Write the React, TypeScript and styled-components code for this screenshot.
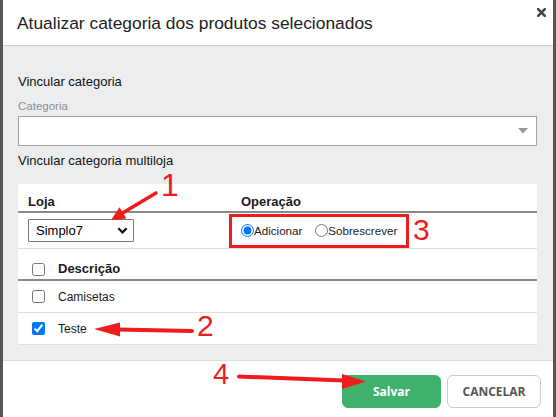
import React from 'react';
import styled, { createGlobalStyle } from 'styled-components';

const GlobalStyle = createGlobalStyle`
  html, body { margin: 0; padding: 0; background: #565656; }
  body { font-family: "Liberation Sans", Arial, sans-serif; }
  * { box-sizing: border-box; }
`;

const Screen = styled.div`
  position: relative;
  width: 556px;
  height: 417px;
  overflow: hidden;
  padding: 0 3px;
  background: #565656;
`;

const Modal = styled.div`
  height: 100%;
  background: #fff;
  display: flex;
  flex-direction: column;
`;

const Header = styled.header`
  display: flex;
  justify-content: space-between;
  align-items: flex-start;
  height: 46px;
  padding: 13px 7px 0 14px;
  border-bottom: 1px solid #cfcfcf;
`;

const Title = styled.h1`
  margin: 0;
  font-size: 17.4px;
  line-height: 20px;
  font-weight: normal;
  color: #222;
`;

const Close = styled.button`
  border: 0;
  background: none;
  padding: 0;
  margin-top: -5px;
  width: 9px;
  height: 9px;
  display: flex;
  cursor: pointer;
`;

const Body = styled.div`
  background: #ecedef;
  padding: 28px 16px 15px 15px;
  border-bottom: 1px solid #dcdcdc;
  display: flex;
  flex-direction: column;
`;

const SectionTitle = styled.div<{ $gap?: number }>`
  font-size: 13px;
  line-height: 16px;
  color: #111;
  margin-top: ${(p) => p.$gap ?? 0}px;
`;

const FieldLabel = styled.label`
  font-size: 11.5px;
  line-height: 14px;
  color: #8e8e8e;
  margin-top: 9px;
`;

const CategorySelect = styled.div`
  margin-top: 3px;
  height: 30px;
  background: #fff;
  border: 1px solid #a3a3a3;
  display: flex;
  align-items: center;
  justify-content: flex-end;
  padding-right: 8px;
`;

const Panel = styled.div`
  margin-top: 15px;
  background: #fff;
  display: flex;
  flex-direction: column;
`;

const StoreGrid = styled.div<{ $head?: boolean }>`
  display: grid;
  grid-template-columns: 213px 1fr;
  align-items: ${(p) => (p.$head ? 'start' : 'center')};
  height: ${(p) => (p.$head ? 29 : 36)}px;
  border-bottom: ${(p) => (p.$head ? '2px solid #8a8a8a' : '1px solid #dddddd')};
`;

const HeadCell = styled.div`
  padding: 10px 10px 0 10px;
  font-size: 13px;
  line-height: 16px;
  font-weight: bold;
  color: #1a1a1a;
`;

const Cell = styled.div`
  padding: 0 10px;
  display: flex;
  align-items: center;
`;

const StoreSelect = styled.div`
  width: 106px;
  height: 23px;
  border: 1px solid #767676;
  border-radius: 1px;
  display: flex;
  align-items: center;
  justify-content: space-between;
  padding: 0 5px 0 7px;
  font-size: 13px;
  color: #000;
  background: #fff;
`;

const RadioLabel = styled.label`
  display: inline-flex;
  align-items: center;
  font-size: 11.6px;
  color: #1a1a1a;
  margin-right: 13px;
  input {
    margin: 0;
    width: 13px;
    height: 13px;
  }
`;

const ListRow = styled.div<{ $head?: boolean }>`
  display: grid;
  grid-template-columns: 13px 1fr;
  column-gap: 13px;
  align-items: center;
  padding-left: 14px;
  padding-top: ${(p) => (p.$head ? 10 : 0)}px;
  height: 32px;
  border-bottom: ${(p) => (p.$head ? '2px solid #8a8a8a' : '1px solid #dddddd')};
  font-size: ${(p) => (p.$head ? 13 : 12)}px;
  font-weight: ${(p) => (p.$head ? 'bold' : 'normal')};
  line-height: 16px;
  color: #1a1a1a;
  input {
    margin: 0;
    width: 13px;
    height: 13px;
  }
`;

const Footer = styled.footer`
  flex: 1;
  display: flex;
  justify-content: flex-end;
  align-items: flex-start;
  gap: 6px;
  padding: 14px 12px 0 0;
`;

const Button = styled.button<{ $primary?: boolean; $w: number }>`
  width: ${(p) => p.$w}px;
  height: 33px;
  border-radius: 6px;
  border: 1px solid ${(p) => (p.$primary ? '#40b06d' : '#cccccc')};
  background: ${(p) => (p.$primary ? '#40b06d' : '#fff')};
  color: ${(p) => (p.$primary ? '#fff' : '#555')};
  font-family: "Open Sans", "Liberation Sans", sans-serif;
  font-weight: 700;
  font-size: 12px;
  padding: 0;
  cursor: pointer;
`;

const Overlay = styled.svg`
  position: absolute;
  top: 0;
  left: 0;
  width: 556px;
  height: 417px;
  pointer-events: none;
`;

const Marker = styled.span<{ $x: number; $y: number; $size: number }>`
  position: absolute;
  left: ${(p) => p.$x}px;
  top: ${(p) => p.$y}px;
  font-size: ${(p) => p.$size}px;
  line-height: ${(p) => p.$size}px;
  color: #ee1c1c;
  font-family: "Liberation Sans", Arial, sans-serif;
  pointer-events: none;
`;

const RED = '#ee1c1c';

export default function App() {
  return (
    <>
      <GlobalStyle />
      <Screen>
        <Modal>
          <Header>
            <Title>Atualizar categoria dos produtos selecionados</Title>
            <Close aria-label="Fechar">
              <svg width="9" height="9" viewBox="0 0 9 9">
                <path d="M1.2 1.2 L7.8 7.8 M7.8 1.2 L1.2 7.8" stroke="#444" strokeWidth="2.6" strokeLinecap="square" />
              </svg>
            </Close>
          </Header>
          <Body>
            <SectionTitle>Vincular categoria</SectionTitle>
            <FieldLabel>Categoria</FieldLabel>
            <CategorySelect>
              <svg width="10" height="6" viewBox="0 0 10 6">
                <polygon points="0,0 10,0 5,5.5" fill="#999" />
              </svg>
            </CategorySelect>
            <SectionTitle $gap={7}>Vincular categoria multiloja</SectionTitle>
            <Panel>
              <StoreGrid $head>
                <HeadCell>Loja</HeadCell>
                <HeadCell>Operação</HeadCell>
              </StoreGrid>
              <StoreGrid>
                <Cell>
                  <StoreSelect>
                    <span>Simplo7</span>
                    <svg width="11" height="7" viewBox="0 0 11 7">
                      <path d="M1.3 1.3 L5.5 5.4 L9.7 1.3" stroke="#111" strokeWidth="2.3" fill="none" />
                    </svg>
                  </StoreSelect>
                </Cell>
                <Cell>
                  <RadioLabel>
                    <input type="radio" name="op" defaultChecked />
                    Adicionar
                  </RadioLabel>
                  <RadioLabel>
                    <input type="radio" name="op" />
                    Sobrescrever
                  </RadioLabel>
                </Cell>
              </StoreGrid>
              <ListRow $head>
                <input type="checkbox" />
                <span>Descrição</span>
              </ListRow>
              <ListRow>
                <input type="checkbox" />
                <span>Camisetas</span>
              </ListRow>
              <ListRow>
                <input type="checkbox" defaultChecked />
                <span>Teste</span>
              </ListRow>
            </Panel>
          </Body>
          <Footer>
            <Button $primary $w={99}>Salvar</Button>
            <Button $w={94}>CANCELAR</Button>
          </Footer>
        </Modal>

        <Overlay viewBox="0 0 556 417">
          <line x1="156" y1="193" x2="123" y2="212.8" stroke={RED} strokeWidth="3.5" strokeLinecap="round" />
          <polygon points="111,220 126.5,218.5 119.5,207.2" fill={RED} />
          <rect x="230.5" y="215.5" width="177" height="31" fill="none" stroke={RED} strokeWidth="3" />
          <line x1="192" y1="331" x2="118" y2="329.5" stroke={RED} strokeWidth="4" strokeLinecap="round" />
          <polygon points="94,329 120,322.5 120,336.5" fill={RED} />
          <line x1="239" y1="376.5" x2="344" y2="380.5" stroke={RED} strokeWidth="4" strokeLinecap="round" />
          <polygon points="366,381.5 342,374 342,389" fill={RED} />
        </Overlay>
        <Marker $x={161} $y={169} $size={32}>1</Marker>
        <Marker $x={197} $y={311} $size={30}>2</Marker>
        <Marker $x={413} $y={215} $size={30}>3</Marker>
        <Marker $x={213} $y={360} $size={29}>4</Marker>
      </Screen>
    </>
  );
}
